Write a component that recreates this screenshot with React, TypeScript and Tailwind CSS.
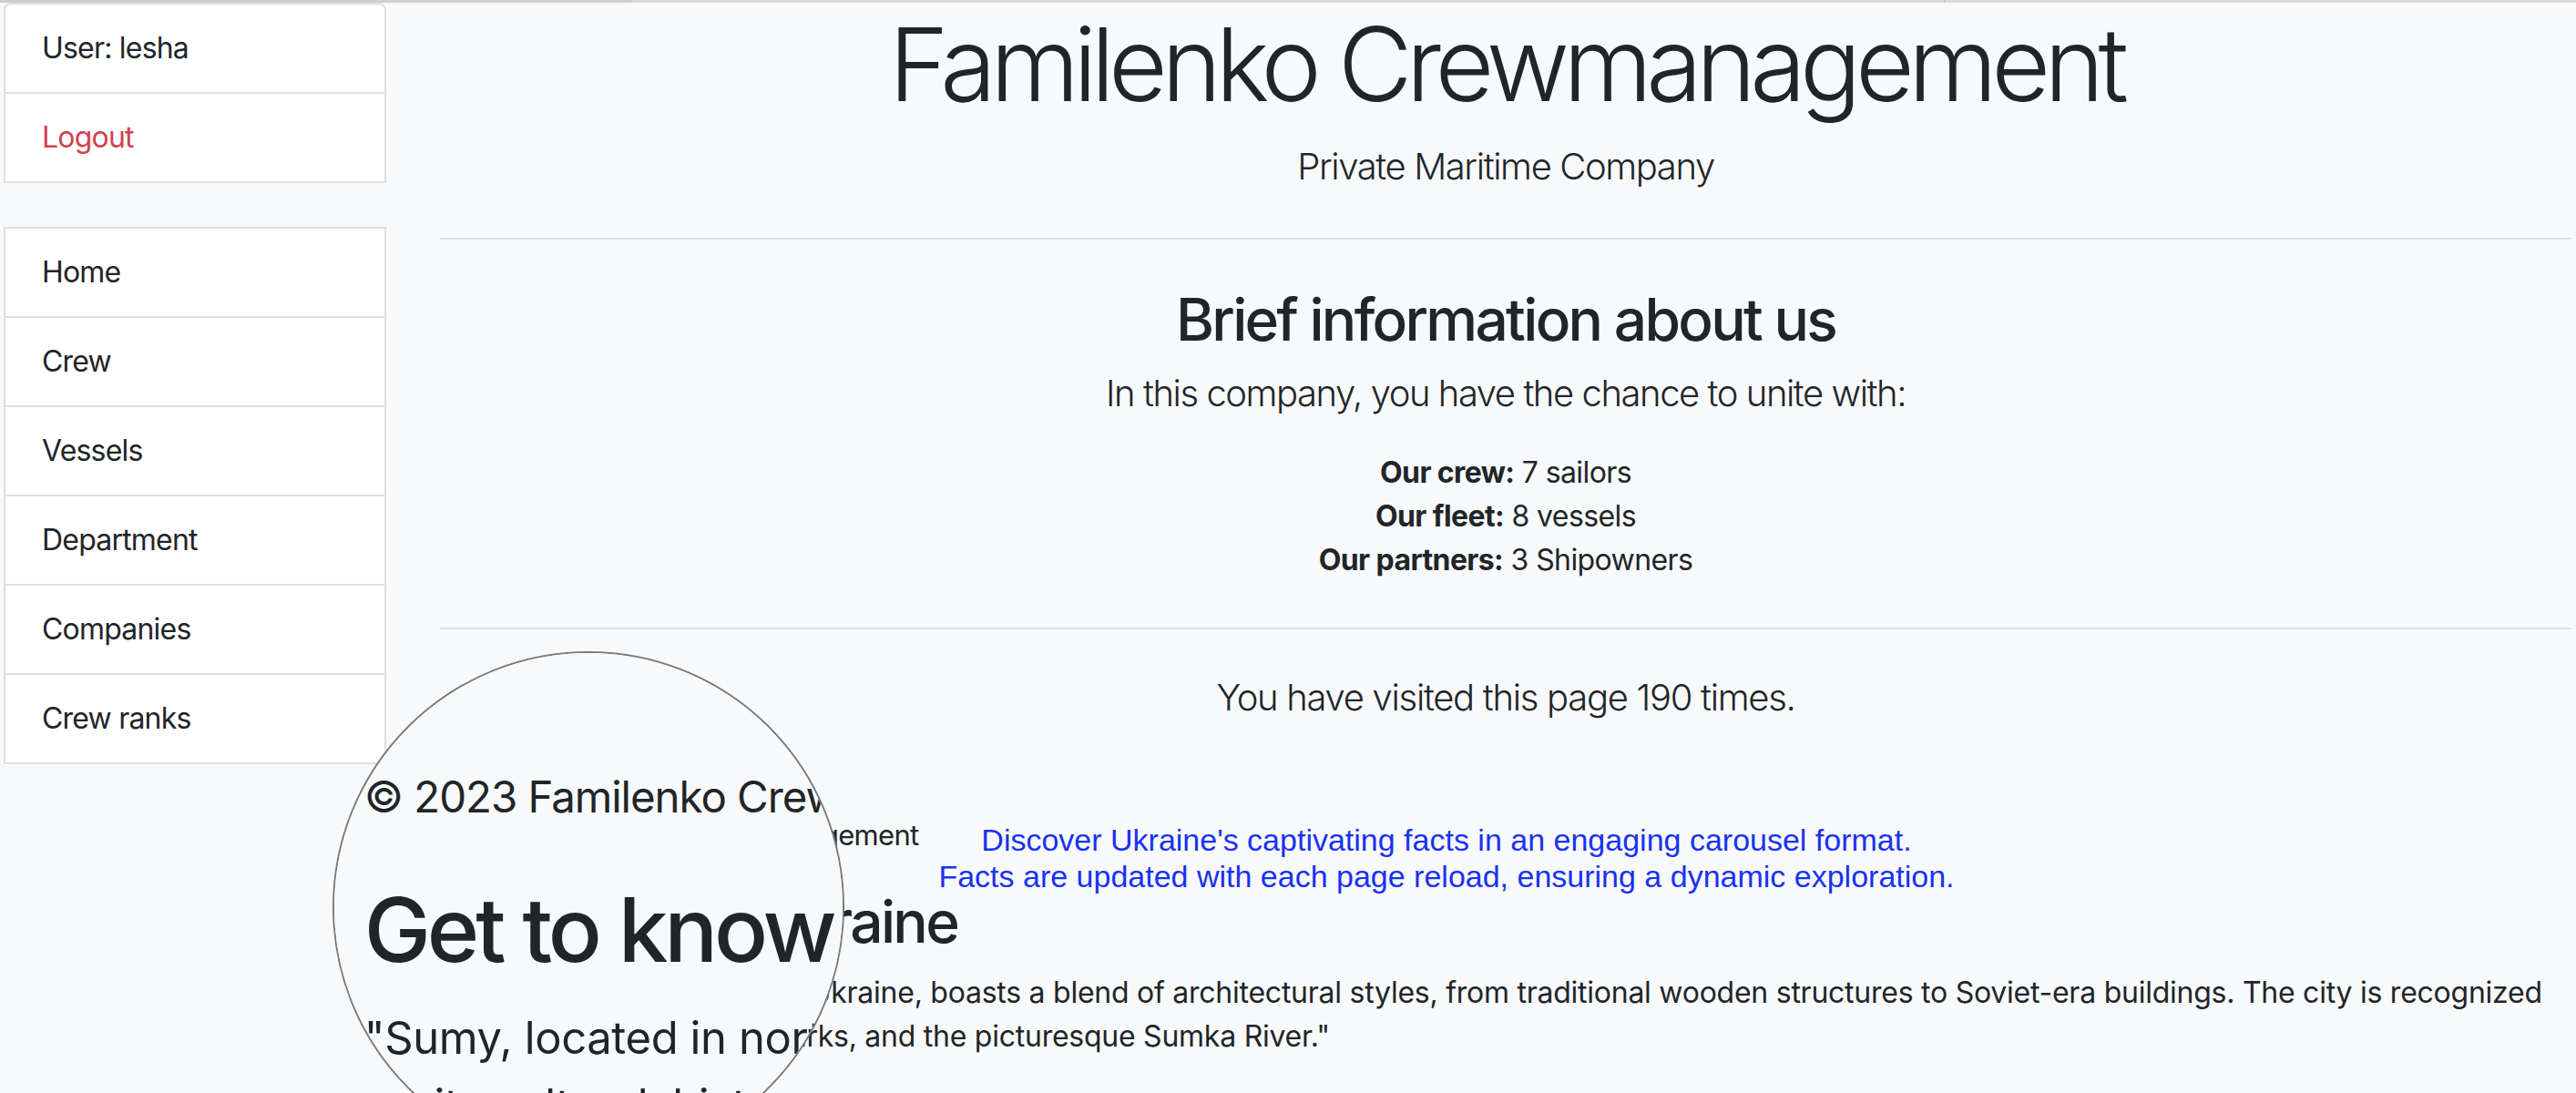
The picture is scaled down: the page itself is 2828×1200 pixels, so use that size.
import React from "react";

const sideItem =
  "h-[98px] px-[40px] flex items-center text-[32px] leading-[48px] tracking-[-0.8px] border-b-2 border-[#dfdfdf] whitespace-nowrap";

function Sidebar() {
  return (
    <aside className="ml-[4px] w-[420px] shrink-0">
      <ul className="bg-white border-x-2 border-t-2 border-[#dfdfdf] rounded-t-[8px]">
        <li className={sideItem}>User: lesha</li>
        <li className={sideItem + " text-[#d2424b]"}>Logout</li>
      </ul>
      <ul className="mt-[48px] bg-white border-x-2 border-t-2 border-[#dfdfdf]">
        <li className={sideItem}>Home</li>
        <li className={sideItem}>Crew</li>
        <li className={sideItem}>Vessels</li>
        <li className={sideItem}>Department</li>
        <li className={sideItem}>Companies</li>
        <li className={sideItem}>Crew ranks</li>
      </ul>
    </aside>
  );
}

function Main() {
  return (
    <main className="ml-[59px] w-[2340px] shrink-0">
      <h1 className="text-center text-[112px] font-light leading-[134px] tracking-[-6.7px] whitespace-nowrap">
        Familenko Crewmanagement
      </h1>
      <p className="mt-[16px] text-center text-[40px] font-light leading-[60px] tracking-[-1.4px]">
        Private Maritime Company
      </p>
      <hr className="mt-[48px] border-0 border-t-2 border-[#dfe0e1]" />
      <h2 className="mt-[49px] text-center text-[64px] font-medium leading-[77px] tracking-[-2.7px]">
        Brief information about us
      </h2>
      <p className="mt-[13px] text-center text-[40px] font-light leading-[60px] tracking-[-1.45px]">
        In this company, you have the chance to unite with:
      </p>
      <div className="mt-[33px] text-center text-[32px] leading-[48px] tracking-[-0.6px]">
        <div>
          <span className="font-bold">Our crew:</span> 7 sailors
        </div>
        <div>
          <span className="font-bold">Our fleet:</span> 8 vessels
        </div>
        <div>
          <span className="font-bold">Our partners:</span> 3 Shipowners
        </div>
      </div>
      <hr className="mt-[50px] border-0 border-t-2 border-[#dfe0e1]" />
      <p className="mt-[45px] text-center text-[40px] font-light leading-[60px] tracking-[-1.3px]">
        You have visited this page 190 times.
      </p>
      <div className="mt-[97px] flex h-[48px] items-start">
        <span className="w-[505px] shrink-0 whitespace-nowrap text-[31px] leading-[48px] tracking-[-0.7px]">
          © 2023 Familenko Crewmanagement
        </span>
        <div className="mt-[9px] w-[1200px] shrink-0 text-center font-['Liberation_Sans',Arial,sans-serif] text-[34px] leading-[40px] text-[#1832f2] whitespace-nowrap">
          <div>Discover Ukraine's captivating facts in an engaging carousel format.</div>
          <div>Facts are updated with each page reload, ensuring a dynamic exploration.</div>
        </div>
      </div>
      <h2 className="mt-[32px] text-[64px] font-medium leading-[77px] tracking-[-2.7px] whitespace-nowrap">
        Get to know Ukraine
      </h2>
      <p className="mt-[16px] text-[32px] leading-[48px] tracking-[-0.25px] whitespace-nowrap">
        <span className="block">
          "Sumy, located in northern Ukraine, boasts a blend of architectural styles, from traditional wooden
          structures to Soviet-era buildings. The city is recognized
        </span>
        <span className="block">for its cultural, historical parks, and the picturesque Sumka River."</span>
      </p>
    </main>
  );
}

function Page() {
  return (
    <div className="w-[2828px] h-[1200px] overflow-hidden bg-[#f8f9fa] text-[#212529] font-['Inter',sans-serif]">
      <div className="flex h-[3px] bg-[#dadada]">
        <div className="w-[693px] border-r border-[#bdbdbd] bg-[#cfcfcf]" />
        <div className="w-[1442px] border-r border-[#bdbdbd]" />
        <div className="flex-1" />
      </div>
      <div className="flex">
        <Sidebar />
        <Main />
      </div>
    </div>
  );
}

export default function App() {
  return (
    <div className="relative w-[2828px] h-[1200px] overflow-hidden">
      <Page />
      <div className="absolute left-[365px] top-[715px] w-[562px] h-[562px] rounded-full border-2 border-[#7a7a7a] overflow-hidden bg-[#f8f9fa]">
        <div className="absolute left-[-367px] top-[-717px] w-[2828px] h-[1200px] scale-[1.53] origin-[640px_995px] pointer-events-none">
          <Page />
        </div>
      </div>
    </div>
  );
}
